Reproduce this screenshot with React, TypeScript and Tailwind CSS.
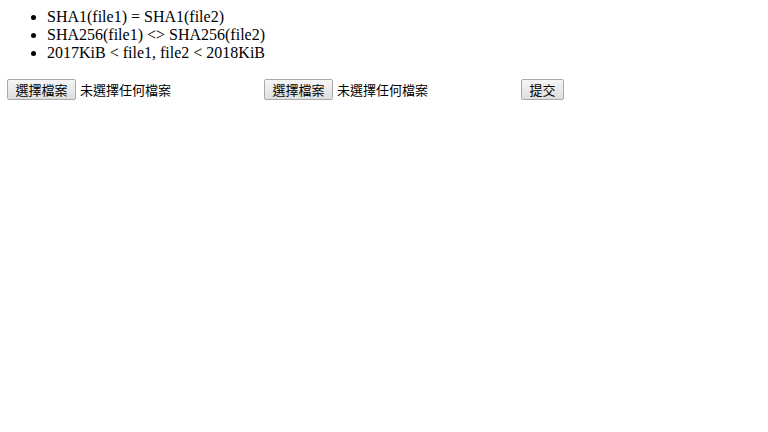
export default function App() {
  const btn =
    "h-[21px] px-[7.5px] border border-[#a9a9a9] rounded-[2px] bg-gradient-to-b from-[#f6f6f6] to-[#dedede] text-[13px] leading-none text-black flex items-center";
  const cjk = { fontFamily: '"Noto Sans CJK TC", "Liberation Sans", sans-serif' };

  return (
    <div className="min-h-screen w-full bg-white pt-2 text-black">
      <ul className="list-disc pl-[47px] text-[16px] leading-[18px] font-['Liberation_Serif',serif]">
        <li>SHA1(file1) = SHA1(file2)</li>
        <li>SHA256(file1) &lt;&gt; SHA256(file2)</li>
        <li>2017KiB &lt; file1, file2 &lt; 2018KiB</li>
      </ul>

      <form className="mt-[17px] pl-[7px] flex items-center" style={cjk} onSubmit={e => e.preventDefault()}>
        <div className="w-[257px] flex items-center gap-[4px]">
          <button type="button" className={btn}>選擇檔案</button>
          <span className="text-[13px]">未選擇任何檔案</span>
        </div>
        <div className="w-[257px] flex items-center gap-[4px]">
          <button type="button" className={btn}>選擇檔案</button>
          <span className="text-[13px]">未選擇任何檔案</span>
        </div>
        <button type="submit" className={btn}>提交</button>
      </form>
    </div>
  );
}
